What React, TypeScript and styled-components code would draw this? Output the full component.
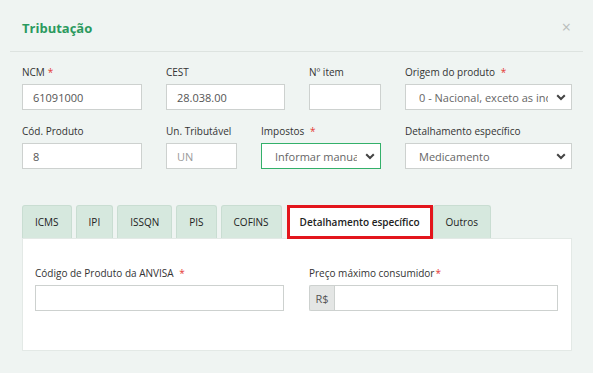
import styled, { createGlobalStyle } from "styled-components";

const GlobalStyle = createGlobalStyle`
  html, body {
    margin: 0;
    padding: 0;
    background: #eff4f2;
    font-family: "Open Sans", "Liberation Sans", sans-serif;
  }
  * { box-sizing: border-box; }
`;

const Modal = styled.div`
  width: 593px;
  height: 373px;
  background: #eff4f2;
  overflow: hidden;
`;

const Header = styled.div`
  display: flex;
  align-items: center;
  justify-content: space-between;
  height: 52px;
  margin: 0 10px;
  padding: 0 12px 0 12px;
  border-bottom: 1px solid #dde3e0;
`;

const Title = styled.h4`
  margin: 0;
  padding-top: 4px;
  font-size: 13px;
  font-weight: 700;
  color: #2b9a5e;
`;

const Close = styled.span`
  color: #b9bdbb;
  font-size: 16px;
  line-height: 1;
  padding-top: 2px;
  margin-right: 0;
`;

const Body = styled.div`
  padding: 13px 21px 0 22px;
`;

const Row = styled.div<{ $top?: number }>`
  display: flex;
  gap: 24px;
  margin-top: ${(p) => p.$top ?? 0}px;
`;

const Field = styled.div<{ $w: number }>`
  width: ${(p) => p.$w}px;
  flex: none;
`;

const Label = styled.label`
  display: block;
  height: 14px;
  margin-bottom: 5px;
  font-size: 10px;
  line-height: 14px;
  color: #333;
  white-space: nowrap;
`;

const Req = styled.span`
  color: #e53935;
  margin-left: 3px;
`;

const Input = styled.div<{ $placeholder?: boolean }>`
  height: 26px;
  display: flex;
  align-items: center;
  padding: 0 10px;
  background: #fff;
  border: 1px solid #cdd1cf;
  font-size: 11px;
  color: ${(p) => (p.$placeholder ? "#9a9a9a" : "#555")};
  flex: 1;
`;

const Select = styled.div<{ $focus?: boolean }>`
  height: 26px;
  display: flex;
  align-items: center;
  padding: 0 5px 0 13px;
  background: #fff;
  border: 1px solid ${(p) => (p.$focus ? "#33b06a" : "#cdd1cf")};
  font-size: 11px;
  color: #666;
`;

const SelectText = styled.span`
  flex: 1;
  overflow: hidden;
  white-space: nowrap;
`;

const Chevron = () => (
  <svg width="10" height="7" viewBox="0 0 10 7" style={{ marginLeft: 8, flex: "none" }}>
    <path d="M1.2 1.2 L5 5 L8.8 1.2" fill="none" stroke="#444" strokeWidth="2" />
  </svg>
);

const Tabs = styled.div`
  display: flex;
  gap: 4px;
  margin-top: 36px;
  height: 33px;
  align-items: flex-end;
`;

const Tab = styled.div<{ $active?: boolean }>`
  height: ${(p) => (p.$active ? 34 : 33)}px;
  align-self: flex-start;
  padding: 0 ${(p) => (p.$active ? 10 : 12)}px;
  display: flex;
  align-items: center;
  font-size: 10px;
  font-weight: ${(p) => (p.$active ? 600 : 400)};
  color: #222;
  background: ${(p) => (p.$active ? "#fff" : "#d6e8de")};
  border: ${(p) => (p.$active ? "3px solid #e3151c" : "1px solid #c9ddd2")};
  border-bottom: ${(p) => (p.$active ? "3px solid #e3151c" : "none")};
  border-radius: ${(p) => (p.$active ? "0" : "3px 3px 0 0")};
  margin-right: ${(p) => (p.$active ? "-4px" : "0")};
  margin-left: ${(p) => (p.$active ? "1px" : "0")};
  position: relative;
  z-index: ${(p) => (p.$active ? 1 : 0)};
`;

const Panel = styled.div`
  width: 550px;
  height: 113px;
  background: #fff;
  border: 1px solid #e3e9e6;
  padding: 27px 13px 0 12px;
  display: grid;
  grid-template-columns: 249px 249px;
  column-gap: 25px;
`;

const Group = styled.div`
  display: flex;
  height: 26px;
`;

const Addon = styled.div`
  width: 25px;
  display: flex;
  align-items: center;
  justify-content: center;
  background: #e4e6e5;
  border: 1px solid #cdd1cf;
  border-right: none;
  border-radius: 2px 0 0 2px;
  font-size: 11px;
  color: #555;
`;

export default function App() {
  return (
    <Modal>
      <GlobalStyle />
      <Header>
        <Title>Tributação</Title>
        <Close>×</Close>
      </Header>
      <Body>
        <Row>
          <Field $w={120}>
            <Label>NCM<Req>*</Req></Label>
            <Input>61091000</Input>
          </Field>
          <Field $w={119}>
            <Label>CEST</Label>
            <Input>28.038.00</Input>
          </Field>
          <Field $w={72}>
            <Label>Nº item</Label>
            <Input />
          </Field>
          <Field $w={167}>
            <Label>Origem do produto <Req>*</Req></Label>
            <Select>
              <SelectText>0 - Nacional, exceto as indicadas nos códigos 3, 4, 5 e 8</SelectText>
              <Chevron />
            </Select>
          </Field>
        </Row>
        <Row $top={14}>
          <Field $w={120}>
            <Label>Cód. Produto</Label>
            <Input>8</Input>
          </Field>
          <Field $w={71}>
            <Label>Un. Tributável</Label>
            <Input $placeholder>UN</Input>
          </Field>
          <Field $w={120}>
            <Label>Impostos <Req>*</Req></Label>
            <Select $focus>
              <SelectText>Informar manualmente</SelectText>
              <Chevron />
            </Select>
          </Field>
          <Field $w={167}>
            <Label>Detalhamento específico</Label>
            <Select>
              <SelectText>Medicamento</SelectText>
              <Chevron />
            </Select>
          </Field>
        </Row>
        <Tabs>
          <Tab>ICMS</Tab>
          <Tab>IPI</Tab>
          <Tab>ISSQN</Tab>
          <Tab>PIS</Tab>
          <Tab>COFINS</Tab>
          <Tab $active>Detalhamento específico</Tab>
          <Tab>Outros</Tab>
        </Tabs>
        <Panel>
          <div>
            <Label>Código de Produto da ANVISA <Req>*</Req></Label>
            <Input />
          </div>
          <div>
            <Label>Preço máximo consumidor<Req style={{ marginLeft: 1 }}>*</Req></Label>
            <Group>
              <Addon>R$</Addon>
              <Input />
            </Group>
          </div>
        </Panel>
      </Body>
    </Modal>
  );
}
